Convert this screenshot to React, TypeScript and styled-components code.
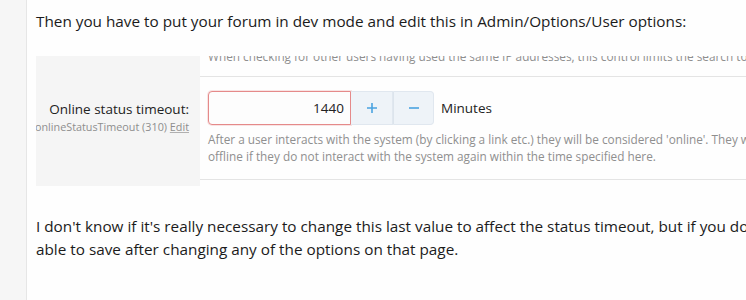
import React from "react";
import styled, { createGlobalStyle } from "styled-components";

const GlobalStyle = createGlobalStyle`
  html, body {
    margin: 0;
    padding: 0;
    background: #fefefe;
  }
  body {
    font-family: "Open Sans", "Noto Sans", "Liberation Sans", sans-serif;
    color: #1b1b1b;
  }
`;

const Page = styled.div`
  display: flex;
  width: 746px;
  height: 300px;
  overflow: hidden;
`;

const Gutter = styled.div`
  flex: 0 0 26px;
  background: #f6f6f6;
  border-right: 1px solid #e6e6e6;
`;

const Post = styled.div`
  flex: 1;
  min-width: 0;
  padding: 10px 0 0 9px;
  overflow: hidden;
`;

const Text = styled.p`
  margin: 0;
  font-size: 15.3px;
  line-height: 23px;
  white-space: nowrap;
`;

const Shot = styled.div`
  display: grid;
  grid-template-columns: 164px minmax(0, 1fr);
  grid-template-rows: 21px auto 1fr;
  height: 130px;
  margin: 23px 0 29px;
  overflow: hidden;
`;

const Label = styled.div`
  background: #f5f5f5;
  display: flex;
  flex-direction: column;
  align-items: flex-end;
  padding: 23px 11px 0 0;
  min-width: 0;
  overflow: hidden;
`;

const LabelTitle = styled.div`
  font-size: 13.5px;
  line-height: 19px;
  color: #222;
  white-space: nowrap;
`;

const LabelHint = styled.div`
  font-size: 10.8px;
  line-height: 16px;
  color: #8e8e8e;
  white-space: nowrap;

  u {
    text-decoration-color: #b0b0b0;
  }
`;

const Cell = styled.div<{ $clipped?: boolean }>`
  box-sizing: border-box;
  display: flex;
  flex-direction: column;
  justify-content: ${(p) => (p.$clipped ? "flex-end" : "flex-start")};
  padding: ${(p) => (p.$clipped ? "0 0 11px 8px" : "14px 0 14px 8px")};
  border-bottom: 1px solid #e4e4e4;
  overflow: ${(p) => (p.$clipped ? "hidden" : "visible")};
  min-width: 0;
`;

const Explain = styled.div`
  font-size: 11.8px;
  line-height: 17px;
  color: #8f8f8f;
  white-space: nowrap;
  flex-shrink: 0;
`;

const Controls = styled.div`
  display: flex;
  align-items: center;
  gap: 7px;
  margin-bottom: 6px;
`;

const Spinner = styled.div`
  display: flex;
  height: 34px;
`;

const NumberBox = styled.div`
  width: 143px;
  box-sizing: border-box;
  border: 1px solid #e58a8a;
  border-radius: 4px 0 0 4px;
  box-shadow: 0 0 0 1px rgba(229, 138, 138, 0.22);
  background: #fdfdfd;
  display: flex;
  align-items: center;
  justify-content: flex-end;
  padding-right: 6px;
  font-size: 13.5px;
  color: #222;
`;

const StepButton = styled.div<{ $last?: boolean }>`
  width: ${(p) => (p.$last ? "41px" : "42px")};
  box-sizing: border-box;
  background: #eef3f8;
  border: 1px solid #e0e7ef;
  border-left: ${(p) => (p.$last ? "1px solid #dce4ec" : "none")};
  border-radius: ${(p) => (p.$last ? "0 4px 4px 0" : "0")};
  display: flex;
  align-items: center;
  justify-content: center;
  color: #4aa3e0;
`;

const Unit = styled.span`
  font-size: 13.5px;
  color: #222;
`;

function PlusIcon() {
  return (
    <svg width="12" height="12" viewBox="0 0 12 12">
      <path d="M6 1v10M1 6h10" stroke="currentColor" strokeWidth="1.6" />
    </svg>
  );
}

function MinusIcon() {
  return (
    <svg width="12" height="12" viewBox="0 0 12 12">
      <path d="M1 6h10" stroke="currentColor" strokeWidth="1.6" />
    </svg>
  );
}

export default function App() {
  return (
    <>
      <GlobalStyle />
      <Page>
        <Gutter />
        <Post>
          <Text>
            Then you have to put your forum in dev mode and edit this in Admin/Options/User options:
          </Text>

          <Shot>
            <Label />
            <Cell $clipped>
              <Explain>
                When checking for other users having used the same IP addresses, this control limits the search to users
              </Explain>
            </Cell>

            <Label>
              <LabelTitle>Online status timeout:</LabelTitle>
              <LabelHint>
                onlineStatusTimeout (310) <u>Edit</u>
              </LabelHint>
            </Label>
            <Cell>
              <Controls>
                <Spinner>
                  <NumberBox>1440</NumberBox>
                  <StepButton>
                    <PlusIcon />
                  </StepButton>
                  <StepButton $last>
                    <MinusIcon />
                  </StepButton>
                </Spinner>
                <Unit>Minutes</Unit>
              </Controls>
              <Explain>
                After a user interacts with the system (by clicking a link etc.) they will be considered 'online'. They will be considered
                <br />
                offline if they do not interact with the system again within the time specified here.
              </Explain>
            </Cell>

            <Label />
            <div />
          </Shot>

          <Text>
            I don't know if it's really necessary to change this last value to affect the status timeout, but if you don't do this you won't be
            <br />
            able to save after changing any of the options on that page.
          </Text>
        </Post>
      </Page>
    </>
  );
}
